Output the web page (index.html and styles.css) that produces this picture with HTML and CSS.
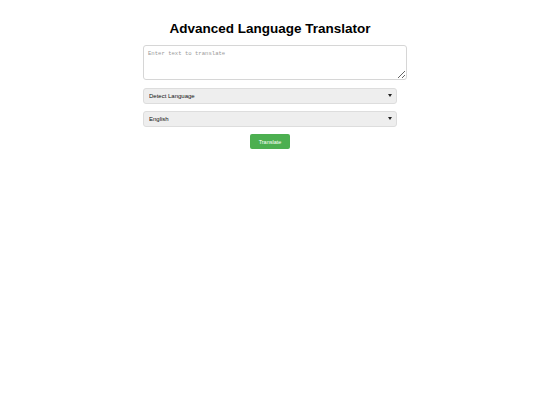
FILE: index.html
```html
<!DOCTYPE html>
<html lang="en">
<head>
    <meta charset="UTF-8">
    <meta name="viewport" content="width=device-width, initial-scale=1.0">
    <title>Advanced Language Translator</title>
    <link rel="stylesheet" href="styles.css">
</head>
<body>
    <div class="container">
        <h1>Advanced Language Translator</h1>
        <textarea id="inputText" placeholder="Enter text to translate"></textarea>
        <div class="select-wrap">
            <select id="sourceLang">
                <option value="auto">Detect Language</option>
                <option value="en">English</option>
                <option value="es">Spanish</option>
            </select>
        </div>
        <div class="select-wrap">
            <select id="targetLang">
                <option value="en">English</option>
                <option value="es">Spanish</option>
                <option value="fr">French</option>
            </select>
        </div>
        <button id="translateBtn">Translate</button>
        <p id="output"></p>
    </div>
</body>
</html>
```

FILE: styles.css
```css
body { font-family: "Liberation Sans", Arial, sans-serif; margin: 0; background: #fff; }
.container { width: 254px; margin: 0 auto; text-align: center; }
h1 { font-size: 13.5px; margin: 21px -60px 9px; color: #000; }
textarea { display: block; width: 254px; height: 25px; padding: 4px; border: 1px solid #d6d6d6; border-radius: 3px; font-family: "Liberation Mono", monospace; font-size: 5.6px; margin: 0 0 8px; resize: vertical; }
textarea::placeholder { color: #999; }
.select-wrap { position: relative; margin: 0 0 7px; }
.select-wrap::after { content: ""; position: absolute; right: 5px; top: 6px; width: 0; height: 0; border-left: 2px solid transparent; border-right: 2px solid transparent; border-top: 3px solid #222; pointer-events: none; }
select { display: block; width: 254px; height: 16px; margin: 0; padding: 0 5px; font-size: 6px; font-family: "Liberation Sans", Arial, sans-serif; color: #111; background: #eee; border: 1px solid #ddd; border-radius: 3px; appearance: none; -webkit-appearance: none; }
button { display: block; margin: 0 auto; padding: 0 9px; height: 15px; font-size: 5.5px; background: #4caf50; color: #fff; border: none; border-radius: 2px; cursor: pointer; }
#output { margin-top: 10px; font-size: 7px; }
```
